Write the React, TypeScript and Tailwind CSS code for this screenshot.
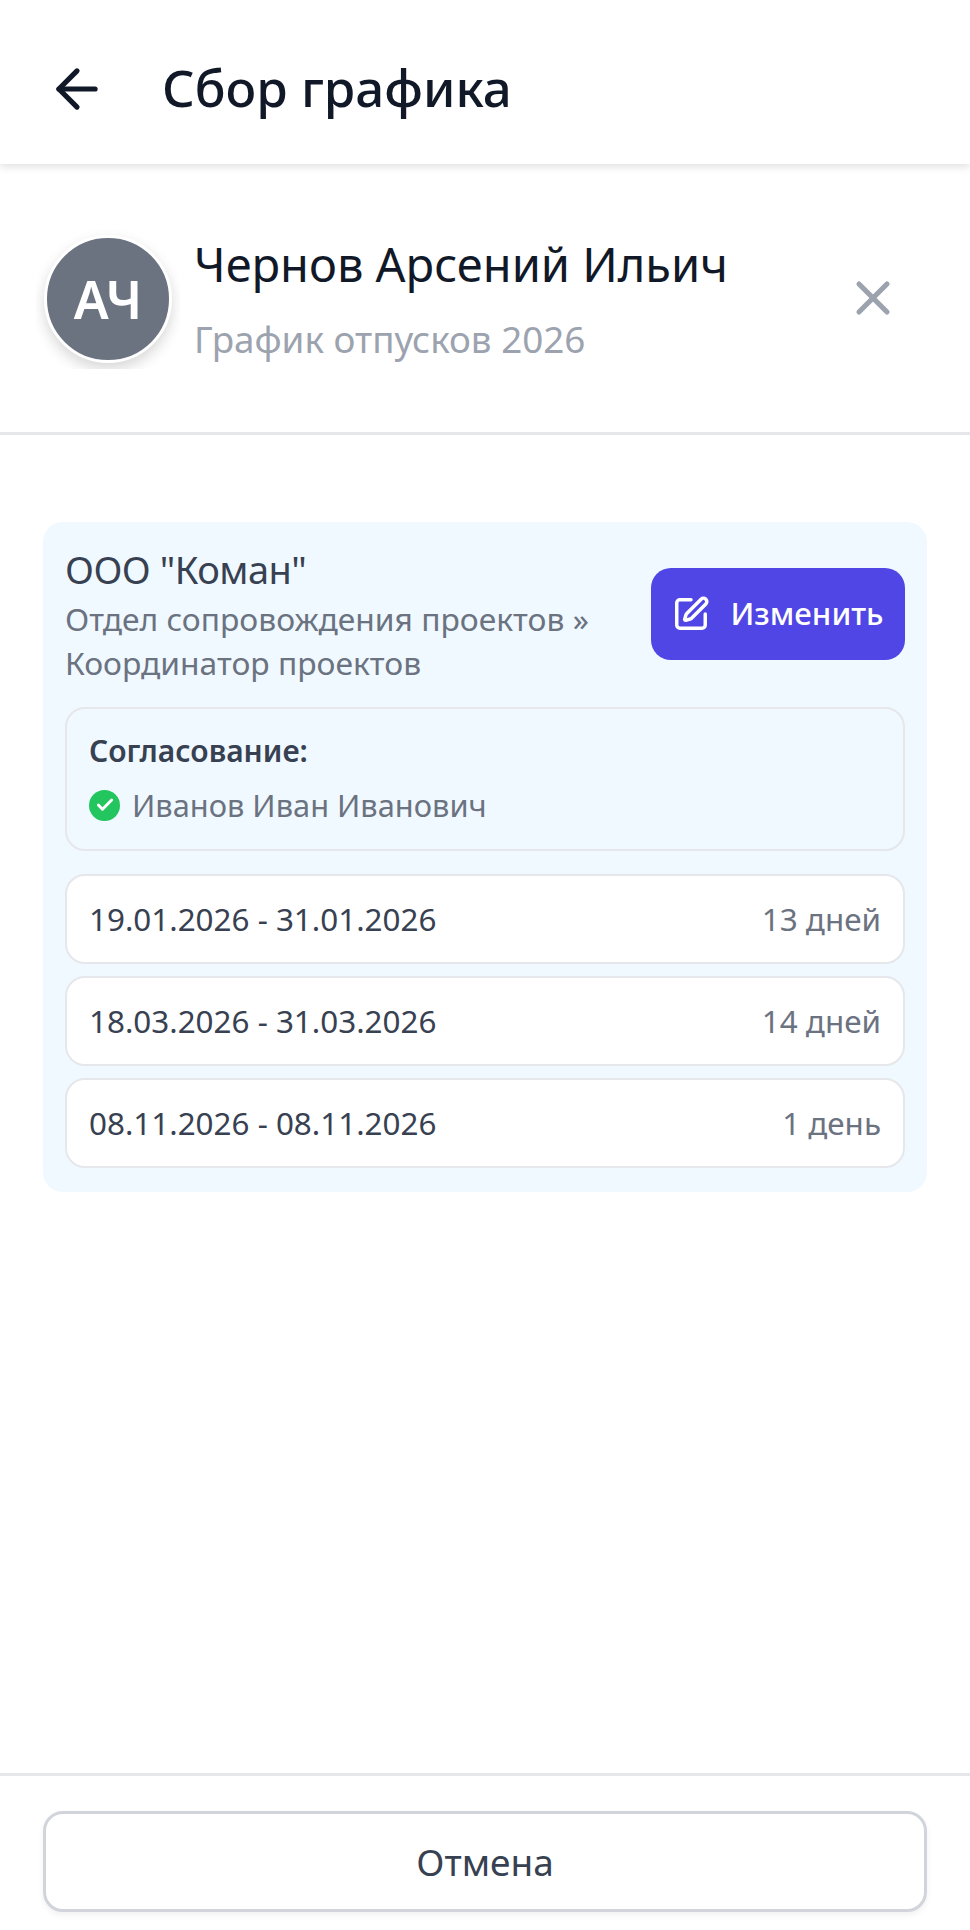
import { ArrowLeft, Check, SquarePen, X } from 'lucide-react'

const periods = [
  { range: '19.01.2026 - 31.01.2026', days: '13 дней' },
  { range: '18.03.2026 - 31.03.2026', days: '14 дней' },
  { range: '08.11.2026 - 08.11.2026', days: '1 день' },
]

export default function App() {
  return (
    <div className="flex h-[1930px] w-[970px] flex-col overflow-hidden bg-white font-['Noto_Sans',sans-serif]">
      <header className="z-10 flex h-[164px] shrink-0 items-center bg-white pl-[46px] pt-[14px] shadow-[0_3px_8px_rgba(0,0,0,0.12)]">
        <ArrowLeft size={62} strokeWidth={2} className="text-[#111827]" />
        <h1 className="ml-[54px] pb-[4px] text-[51px] font-medium leading-[60px] text-[#111827]">Сбор графика</h1>
      </header>

      <section className="flex h-[271px] shrink-0 items-center border-b-[3px] border-[#e5e7eb] pl-[36px] pr-[69px]">
        <div className="overflow-hidden px-[8px] pb-[6px] pt-[8px]">
          <div className="flex h-[128px] w-[128px] items-center justify-center rounded-full border-[3px] border-white bg-[#6b7280] text-[52px] font-semibold text-white shadow-[0_6px_14px_rgba(0,0,0,0.16)]">
            АЧ
          </div>
        </div>
        <div className="ml-[14px] flex-1">
          <div className="text-[47px] leading-[56px] text-[#111827]">Чернов Арсений Ильич</div>
          <div className="mt-[25px] text-[36.8px] leading-[44px] text-[#9ca3af]">График отпусков 2026</div>
        </div>
        <X size={56} strokeWidth={2.2} className="text-[#9ca3af]" />
      </section>

      <main className="flex-1 px-[43px] pt-[87px]">
        <div className="rounded-[20px] bg-[#f0f9ff] p-[22px] pb-[24px]">
          <div className="flex items-center justify-between">
            <div>
              <div className="text-[38px] leading-[50px] tracking-[-0.5px] text-[#374151]">ООО "Коман"</div>
              <div className="mt-[3px] w-[560px] text-[31.8px] leading-[44px] text-[#6b7280]">
                Отдел сопровождения проектов » Координатор проектов
              </div>
            </div>
            <button className="-mt-[1px] flex h-[92px] w-[254px] shrink-0 items-center justify-center gap-[20px] rounded-[20px] bg-[#4f46e5] pb-[1px] text-[31.2px] font-medium text-white">
              <SquarePen size={38} strokeWidth={2.2} />
              Изменить
            </button>
          </div>

          <div className="mt-[22px] h-[144px] rounded-[20px] border-[2.5px] border-[#e5e7eb] px-[22px] pt-[20px]">
            <div className="text-[30px] font-semibold leading-[44px] text-[#374151]">Согласование:</div>
            <div className="mt-[10px] flex items-center gap-[12px] text-[30.8px] leading-[44px] text-[#6b7280]">
              <span className="flex h-[31px] w-[31px] items-center justify-center rounded-full bg-[#22c55e]">
                <Check size={20} strokeWidth={3.5} className="text-white" />
              </span>
              Иванов Иван Иванович
            </div>
          </div>

          <div className="mt-[23px] flex flex-col gap-[12px]">
            {periods.map(p => (
              <div
                key={p.range}
                className="flex h-[90px] items-center justify-between rounded-[20px] border-[2.5px] border-[#e5e7eb] bg-white px-[22px] pb-[1px] text-[31.4px]"
              >
                <span className="text-[#374151]">{p.range}</span>
                <span className="text-[#6b7280]">{p.days}</span>
              </div>
            ))}
          </div>
        </div>
      </main>

      <footer className="h-[157px] shrink-0 border-t-[3px] border-[#e5e7eb] px-[43px] pt-[35px]">
        <button className="h-[101px] w-full rounded-[20px] border-[3px] border-[#d1d5db] bg-white text-[37px] text-[#374151] shadow-[0_3px_6px_rgba(0,0,0,0.06)]">
          Отмена
        </button>
      </footer>
    </div>
  )
}
